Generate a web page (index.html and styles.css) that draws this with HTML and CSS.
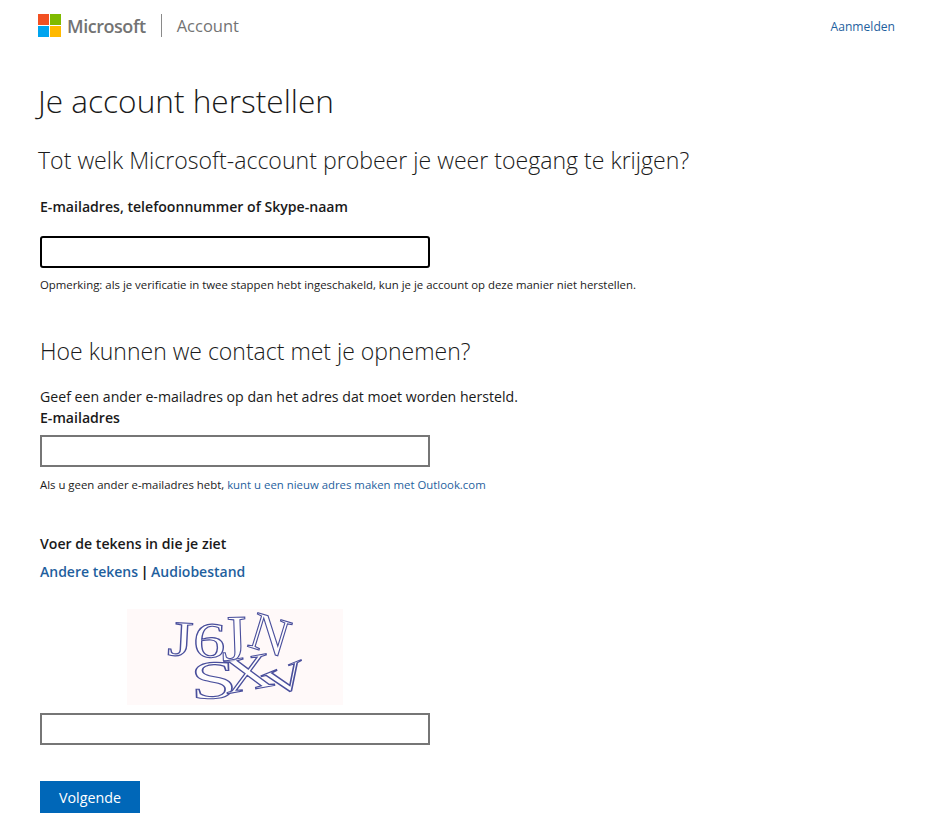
FILE: index.html

```html
<!DOCTYPE html>
<html>
<head>
    <title>Je account herstellen</title>
    <link rel="stylesheet" href="styles.css">
</head>
<body>
    <div class="header">
        <div class="brand">
            <svg class="logo" width="23" height="23" viewBox="0 0 23 23">
                <rect x="0" y="0" width="11" height="11" fill="#f25022"/>
                <rect x="12" y="0" width="11" height="11" fill="#7fba00"/>
                <rect x="0" y="12" width="11" height="11" fill="#00a4ef"/>
                <rect x="12" y="12" width="11" height="11" fill="#ffb900"/>
            </svg>
            <span class="wordmark">Microsoft</span>
            <span class="divider"></span>
            <span class="product">Account</span>
        </div>
        <a class="signin" href="#">Aanmelden</a>
    </div>

    <div class="content">
        <h1>Je account herstellen</h1>
        <h2 class="sub">Tot welk Microsoft-account probeer je weer toegang te krijgen?</h2>

        <div class="form">
            <label class="label-first">E-mailadres, telefoonnummer of Skype-naam</label>
            <input class="field field-focus" type="text">
            <p class="note">Opmerking: als je verificatie in twee stappen hebt ingeschakeld, kun je je account op deze manier niet herstellen.</p>

            <h2 class="contact">Hoe kunnen we contact met je opnemen?</h2>
            <p class="intro">Geef een ander e-mailadres op dan het adres dat moet worden hersteld.</p>
            <label class="label-email">E-mailadres</label>
            <input class="field" type="text">
            <p class="note note-link">Als u geen ander e-mailadres hebt, <a href="#">kunt u een nieuw adres maken met Outlook.com</a></p>

            <label class="label-captcha">Voer de tekens in die je ziet</label>
            <p class="captcha-links"><a href="#">Andere tekens</a> <span class="sep">|</span> <a href="#">Audiobestand</a></p>

            <div class="captcha">
                <svg width="216" height="96" viewBox="0 0 216 96">
                    <rect width="216" height="96" fill="#fff9f9"/>
                    <g class="captcha-text">
                        <text transform="translate(40 46) rotate(3) scale(1.3 1)" font-size="50">J6</text>
                        <text transform="translate(95 52) rotate(-2)" font-size="66">J</text>
                        <text transform="translate(119 37) rotate(17)" font-size="54">N</text>
                        <text transform="translate(64 90) rotate(-2) scale(1.55 1)" font-size="54">S</text>
                        <text transform="translate(99 85) rotate(-10) scale(1.4 1)" font-size="50">X</text>
                        <text transform="translate(143 90) rotate(-22) scale(1.6 1)" font-size="38">V</text>
                    </g>
                </svg>
            </div>

            <input class="field" type="text">
            <button class="next">Volgende</button>
        </div>
    </div>
</body>
</html>
```

FILE: styles.css

```css
body {
    font-family: "Open Sans", "Noto Sans", sans-serif;
    background-color: #ffffff;
    color: #1a1a1a;
    margin: 0;
}

a {
    color: #1f5f9e;
    text-decoration: none;
}

.header {
    display: flex;
    justify-content: space-between;
    align-items: center;
    padding: 14px 43px 0 38px;
    height: 23px;
}

.brand {
    display: flex;
    align-items: center;
}

.logo {
    margin-right: 6px;
}

.wordmark {
    font-size: 18px;
    font-weight: 600;
    color: #737373;
    letter-spacing: -0.45px;
}

.divider {
    width: 1px;
    height: 23px;
    background: #8a8a8a;
    margin: 0 15px;
}

.product {
    font-size: 16.5px;
    color: #737373;
}

.signin {
    font-size: 12.1px;
    padding-top: 1px;
}

.content {
    padding: 0 38px;
}

h1 {
    font-size: 31.6px;
    font-weight: 300;
    line-height: 44px;
    margin: 42px 0 0;
}

h2 {
    font-size: 23px;
    font-weight: 300;
    line-height: 30px;
    margin: 0;
}

.sub {
    font-size: 23.1px;
    margin-top: 22px;
}

.form {
    padding-left: 2px;
}

label {
    display: block;
    font-size: 14.1px;
    font-weight: 600;
    line-height: 20px;
}

.label-first {
    margin-top: 22px;
}

.field {
    display: block;
    box-sizing: border-box;
    width: 390px;
    height: 32px;
    padding: 0 8px;
    border: 2px solid #767676;
    background: #ffffff;
    outline: none;
}

.field-focus {
    margin-top: 19px;
    border-color: #000000;
    border-radius: 3px;
}

.note {
    font-size: 11.38px;
    line-height: 16px;
    margin: 9px 0 0;
}

.note-link {
    margin-top: 10px;
}

.contact {
    margin-top: 43px;
}

.intro {
    font-size: 14.15px;
    line-height: 20px;
    margin: 21px 0 0;
}

.label-email {
    margin: 1px 0 7px;
}

.label-captcha {
    margin-top: 41px;
}

.captcha-links {
    font-size: 14px;
    font-weight: 600;
    line-height: 20px;
    margin: 8px 0 0;
}

.sep {
    color: #1a1a1a;
    font-weight: 700;
    margin: 0 -1px;
}

.captcha {
    margin: 27px 0 8px 87px;
    height: 96px;
}

.captcha-text text {
    font-family: "Liberation Serif", serif;
    fill: #ffffff;
    fill-opacity: 0.6;
    stroke: #4a4f9c;
    stroke-width: 1.1;
}

.next {
    display: block;
    width: 100px;
    height: 32px;
    margin-top: 36px;
    background-color: #0067b8;
    color: #ffffff;
    border: none;
    font-family: inherit;
    font-size: 14.3px;
}
```
